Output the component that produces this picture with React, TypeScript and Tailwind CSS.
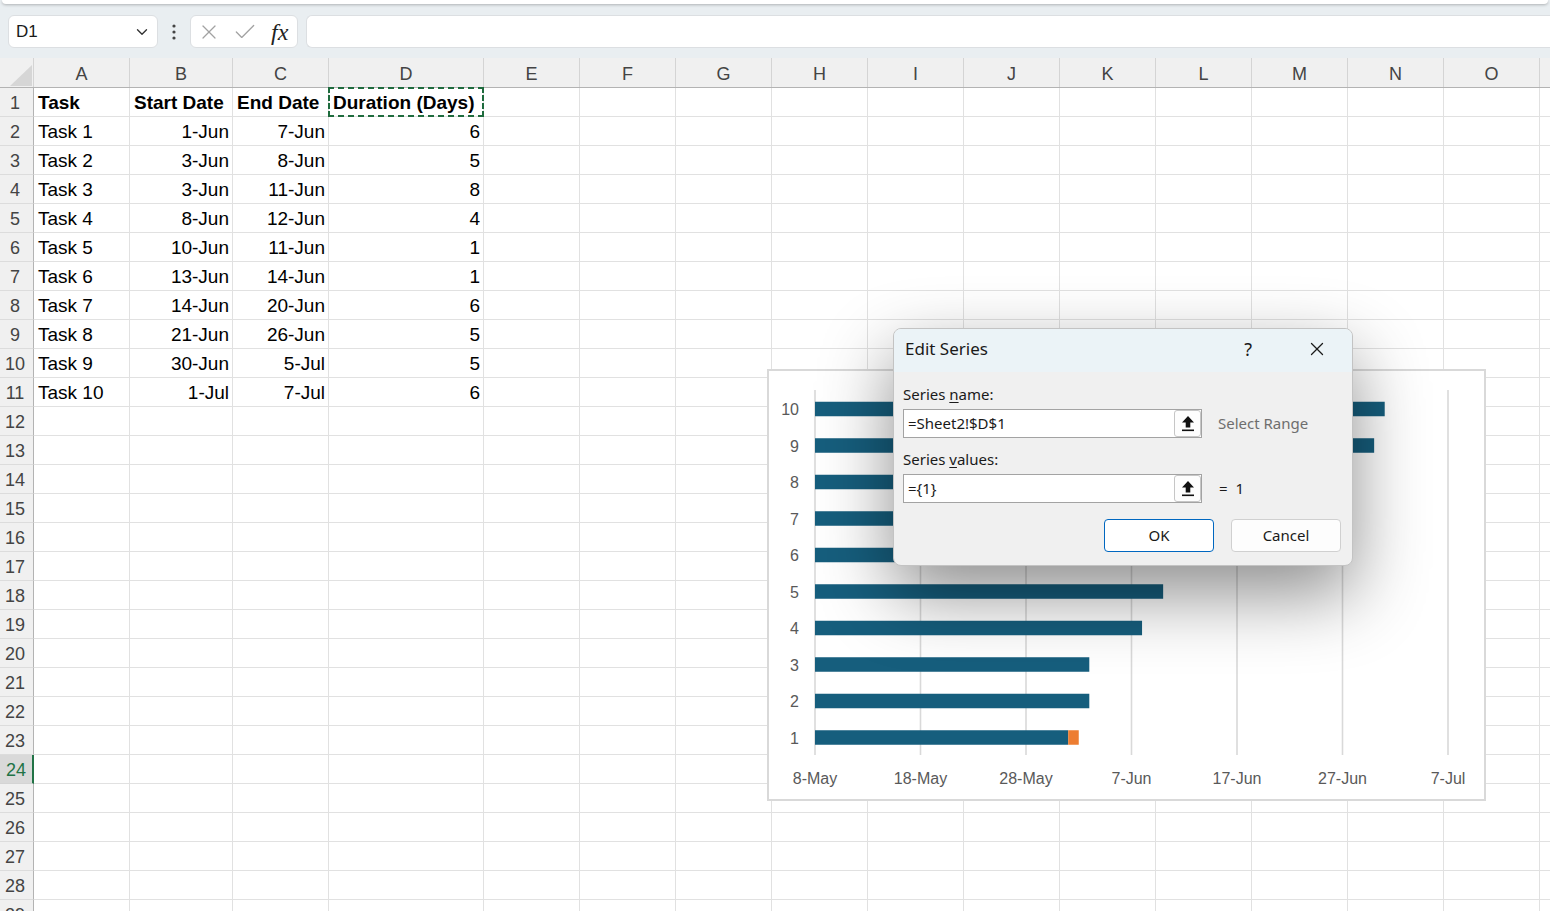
import React from "react";
import { ChevronDown, X, Check } from "lucide-react";

// column letters + widths (px), first 4 are the data columns
const columns = [
    { l: "A", w: 96 },
    { l: "B", w: 103 },
    { l: "C", w: 96 },
    { l: "D", w: 155 },
    ...["E", "F", "G", "H", "I", "J", "K", "L", "M", "N", "O", ""].map((l) => ({ l, w: 96 })),
];

const rows: string[][] = [
    ["Task", "Start Date", "End Date", "Duration (Days)"],
    ["Task 1", "1-Jun", "7-Jun", "6"],
    ["Task 2", "3-Jun", "8-Jun", "5"],
    ["Task 3", "3-Jun", "11-Jun", "8"],
    ["Task 4", "8-Jun", "12-Jun", "4"],
    ["Task 5", "10-Jun", "11-Jun", "1"],
    ["Task 6", "13-Jun", "14-Jun", "1"],
    ["Task 7", "14-Jun", "20-Jun", "6"],
    ["Task 8", "21-Jun", "26-Jun", "5"],
    ["Task 9", "30-Jun", "5-Jul", "5"],
    ["Task 10", "1-Jul", "7-Jul", "6"],
];

// days after 8-May for each task start
const startOffsets = [24, 26, 26, 31, 33, 36, 37, 44, 53, 54];
const xLabels = ["8-May", "18-May", "28-May", "7-Jun", "17-Jun", "27-Jun", "7-Jul"];

const GanttChart: React.FC = () => {
    const x0 = 46;
    const perDay = 10.55;
    const rowY = (i: number) => 366.5 - i * 36.5;
    return (
        <div className="absolute left-[767px] top-[369px] w-[719px] h-[432px] bg-white border-2 border-[#d9d9d9]">
            <svg width="715" height="428" className="block" style={{ fontFamily: '"Liberation Sans", Arial, sans-serif' }}>
                {xLabels.map((lab, i) => {
                    const x = x0 + i * perDay * 10;
                    return (
                        <g key={lab}>
                            <line x1={x} x2={x} y1={19} y2={384} stroke="#d9d9d9" strokeWidth={1.6} />
                            <text x={x} y={413} textAnchor="middle" fontSize={16} fill="#595959">{lab}</text>
                        </g>
                    );
                })}
                {startOffsets.map((d, i) => (
                    <g key={i}>
                        <rect x={x0} y={rowY(i) - 7.25} width={d * perDay} height={14.5} fill="#165e7d" />
                        {i === 0 && (
                            <rect x={x0 + d * perDay} y={rowY(i) - 7.25} width={perDay} height={14.5} fill="#ed7d31" />
                        )}
                        <text x={30} y={rowY(i) + 6} textAnchor="end" fontSize={16} fill="#595959">{i + 1}</text>
                    </g>
                ))}
            </svg>
        </div>
    );
};

const UpArrow: React.FC = () => (
    <svg width="14" height="17" viewBox="0 0 14 17">
        <polygon points="7,1 13,7.5 9.3,7.5 9.3,12.5 4.7,12.5 4.7,7.5 1,7.5" fill="#111" />
        <rect x="1" y="14.5" width="12" height="1.6" fill="#111" />
    </svg>
);

const RefInput: React.FC<{ value: string }> = ({ value }) => (
    <div className="w-[299px] h-[29px] bg-white border border-[#a3a3a3] flex items-center">
        <span className="flex-1 pl-[4px] text-[15px] text-[#1a1a1a]">{value}</span>
        <div className="w-[27px] h-[27px] border border-[#c6c6c6] rounded-[3px] bg-[#fdfdfd] flex items-center justify-center">
            <UpArrow />
        </div>
    </div>
);

const EditSeriesDialog: React.FC = () => (
    <div
        className="absolute left-[893px] top-[328px] w-[460px] h-[238px] rounded-[8px] border border-[#c3c3c3] bg-[#f0f0f0] overflow-hidden shadow-[0_28px_72px_rgba(0,0,0,0.45)]"
        style={{ fontFamily: '"Noto Sans", "Open Sans", sans-serif' }}
    >
        <div className="h-[43px] bg-[#ebf3f7] flex items-center pl-[11px] pr-[24px] pb-[3px]">
            <span className="text-[17px] text-[#1a1a1a] flex-1">Edit Series</span>
            <span className="text-[18px] text-[#1a1a1a] mr-[54px]">?</span>
            <X size={22} strokeWidth={1.4} color="#1a1a1a" />
        </div>
        <div className="pl-[9px] pr-[11px]">
            <div className="mt-[12px] h-[20px] leading-[20px] text-[15px] text-[#1a1a1a]">
                Series <span className="underline underline-offset-2">n</span>ame:
            </div>
            <div className="mt-[5px] flex items-center">
                <RefInput value="=Sheet2!$D$1" />
                <span className="ml-[16px] text-[15px] text-[#6e6e6e]">Select Range</span>
            </div>
            <div className="mt-[11px] h-[20px] leading-[20px] text-[15px] text-[#1a1a1a]">
                Series <span className="underline underline-offset-2">v</span>alues:
            </div>
            <div className="mt-[5px] flex items-center">
                <RefInput value="={1}" />
                <span className="ml-[17px] text-[15px] text-[#1a1a1a]">=&nbsp; 1</span>
            </div>
            <div className="mt-[16px] flex justify-end gap-[17px]">
                <button className="w-[110px] h-[33px] rounded-[4px] border border-[#0067c0] bg-white text-[15px] text-[#1a1a1a]">OK</button>
                <button className="w-[110px] h-[33px] rounded-[4px] border border-[#d0d0d0] bg-[#fdfdfd] text-[15px] text-[#1a1a1a]">Cancel</button>
            </div>
        </div>
    </div>
);

const FormulaBar: React.FC = () => (
    <div className="h-[58px] bg-[#e9eef1] relative">
        <div className="h-[4px] bg-white rounded-b-[6px] shadow-[0_1px_3px_rgba(0,0,0,0.25)] mx-[2px]" />
        <div className="flex items-center pt-[11px] pl-[8px] gap-[8px]">
            <div className="w-[150px] h-[33px] bg-white rounded-[6px] border border-[#dcdfe2] flex items-center pl-[7px] pr-[6px]">
                <span className="flex-1 text-[17px] text-[#1a1a1a]">D1</span>
                <ChevronDown size={18} strokeWidth={1.8} color="#333" />
            </div>
            <svg width="16" height="20" viewBox="0 0 16 20">
                <circle cx="8" cy="4" r="1.6" fill="#444" />
                <circle cx="8" cy="10" r="1.6" fill="#444" />
                <circle cx="8" cy="16" r="1.6" fill="#444" />
            </svg>
            <div className="w-[108px] h-[33px] bg-white rounded-[6px] border border-[#dcdfe2] flex items-center pl-[6px] gap-[11px]">
                <X size={24} strokeWidth={1.2} color="#a2a2a2" />
                <Check size={26} strokeWidth={1.2} color="#a2a2a2" />
                <span className="text-[24px] italic text-[#222] leading-none ml-[2px]" style={{ fontFamily: '"Liberation Serif", serif' }}>fx</span>
            </div>
            <div className="flex-1 h-[33px] bg-white rounded-l-[6px] border border-[#dcdfe2] border-r-0" />
        </div>
    </div>
);

export default function App() {
    const rowCount = 29;
    return (
        <div
            className="w-[1550px] h-[911px] overflow-hidden bg-white relative"
            style={{ fontFamily: '"Liberation Sans", Arial, sans-serif' }}
        >
            <FormulaBar />

            {/* column headers */}
            <div className="flex h-[30px] bg-[#f0f0f0] border-b border-[#b3b3b3]">
                <div className="w-[34px] shrink-0 border-r border-[#d4d4d4] flex items-end justify-end">
                    <svg width="26" height="24" viewBox="0 0 26 24">
                        <polygon points="25,2 25,23 3,23" fill="#d6d6d6" />
                    </svg>
                </div>
                {columns.map((c, ci) => (
                    <div
                        key={ci}
                        style={{ width: c.w }}
                        className="shrink-0 border-r border-[#d4d4d4] flex items-center justify-center text-[18px] text-[#444] pt-[4px]"
                    >
                        {c.l}
                    </div>
                ))}
            </div>

            {/* rows */}
            {Array.from({ length: rowCount }).map((_, r) => {
                const rowData = rows[r];
                const active = r + 1 === 24;
                return (
                    <div key={r} className="flex h-[29px]">
                        <div
                            className={
                                active
                                    ? "w-[34px] shrink-0 bg-[#d9d9d9] border-r-2 border-[#217346] border-b border-b-[#d4d4d4] flex items-center justify-center text-[18px] text-[#217346] pt-[2px]"
                                    : "w-[34px] shrink-0 bg-[#f0f0f0] border-r border-[#b3b3b3] border-b border-b-[#dcdcdc] flex items-center justify-center text-[18px] text-[#444] pt-[2px] pr-[3px]"
                            }
                        >
                            {r + 1}
                        </div>
                        {columns.map((c, ci) => {
                            const val = rowData && ci < 4 ? rowData[ci] : "";
                            const header = r === 0;
                            const right = !header && ci > 0;
                            const selected = header && ci === 3;
                            return (
                                <div
                                    key={ci}
                                    style={{ width: c.w }}
                                    className={
                                        "shrink-0 border-r border-b border-[#e1e1e1] flex items-center text-[19px] text-black whitespace-nowrap overflow-visible relative pt-[2px] " +
                                        (right ? "justify-end pr-[3px] " : "pl-[4px] ") +
                                        (header ? "font-bold " : "")
                                    }
                                >
                                    {selected && (
                                        <div className="absolute inset-[-1px] border-2 border-dashed border-[#1e6b3d]" />
                                    )}
                                    {val}
                                </div>
                            );
                        })}
                    </div>
                );
            })}

            <GanttChart />
            <EditSeriesDialog />
        </div>
    );
}
